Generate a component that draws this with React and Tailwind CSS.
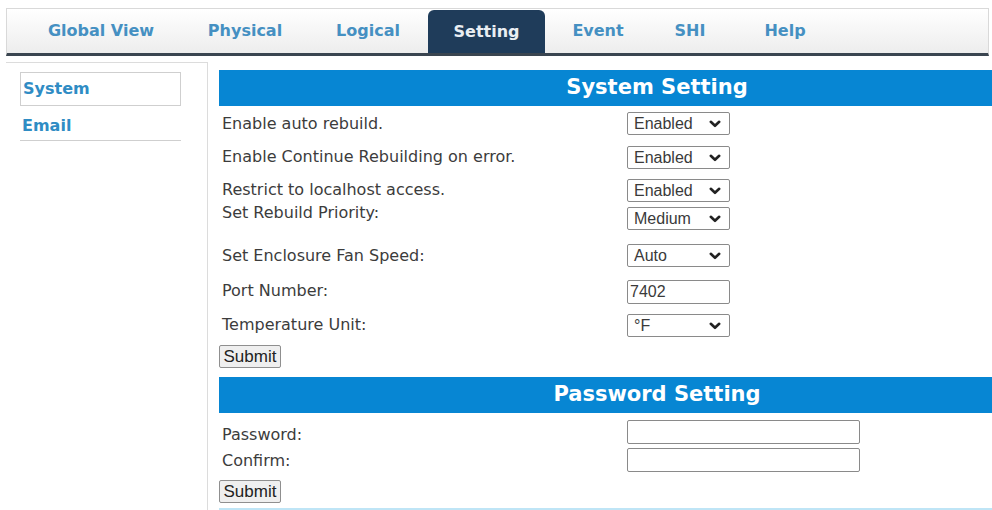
import React from "react";

const tabs = [
  { name: "Global View", ml: "ml-[49px]" },
  { name: "Physical", ml: "ml-[54px]" },
  { name: "Logical", ml: "ml-[33px]" },
  { name: "Setting", ml: "ml-[15px]", active: true },
  { name: "Event", ml: "ml-[8px]" },
  { name: "SHI", ml: "ml-[2px]" },
  { name: "Help", ml: "ml-[5px]" },
];

const Chevron = () => (
  <svg width="12" height="8" viewBox="0 0 12 8" className="flex-none">
    <path d="M1.8 1.8 L6 5.8 L10.2 1.8" fill="none" stroke="#222" strokeWidth="2.6" strokeLinecap="round" strokeLinejoin="round" />
  </svg>
);

// Fake native dropdown so it renders the same everywhere
const Select = ({ value }) => (
  <div className="w-[103px] h-[23px] flex items-center justify-between pl-[6px] pr-[8px] border border-[#8a8a8a] rounded-[2px] bg-white text-[16px] text-[#3a3a3a] font-['Liberation_Sans',sans-serif]">
    <span>{value}</span>
    <Chevron />
  </div>
);

const TextBox = ({ value = "", w = "w-[103px]" }) => (
  <div className={`${w} h-[24px] flex items-center pl-[2px] border border-[#8a8a8a] rounded-[2px] bg-white text-[16px] text-[#3a3a3a] font-['Liberation_Sans',sans-serif]`}>
    {value}
  </div>
);

const SubmitButton = ({ mt }) => (
  <div className={`${mt} w-[62px] h-[23px] flex items-center justify-center border border-[#8f8f8f] rounded-[2px] bg-[#efefef] text-[17px] text-[#222] font-['Liberation_Sans',sans-serif]`}>
    Submit
  </div>
);

const SectionHeader = ({ title, mt }) => (
  <div className={`${mt} h-[36px] w-[876px] bg-[#0786d3] flex items-center justify-center text-white text-[21px] font-bold`}>
    {title}
  </div>
);

// label mt / control mt / row height per row
const systemRows = [
  { label: "Enable auto rebuild.", control: <Select value="Enabled" />, h: "h-[34px]", lt: "mt-[9px]", ct: "mt-[6px]" },
  { label: "Enable Continue Rebuilding on error.", control: <Select value="Enabled" />, h: "h-[33px]", lt: "mt-[8px]", ct: "mt-[6px]" },
  { label: "Restrict to localhost access.", control: <Select value="Enabled" />, h: "h-[29px]", lt: "mt-[8px]", ct: "mt-[6px]" },
  { label: "Set Rebuild Priority:", control: <Select value="Medium" />, h: "h-[36px]", lt: "mt-[2px]", ct: "mt-[5px]" },
  { label: "Set Enclosure Fan Speed:", control: <Select value="Auto" />, h: "h-[37px]", lt: "mt-[9px]", ct: "mt-[6px]" },
  { label: "Port Number:", control: <TextBox value="7402" />, h: "h-[33px]", lt: "mt-[7px]", ct: "mt-[5px]" },
  { label: "Temperature Unit:", control: <Select value="°F" />, h: "h-[36px]", lt: "mt-[8px]", ct: "mt-[6px]" },
];

const FormRow = ({ row }) => (
  <div className={`${row.h} flex items-start`}>
    <div className={`${row.lt} w-[408px] pl-[3px] leading-[18px]`}>{row.label}</div>
    <div className={row.ct}>{row.control}</div>
  </div>
);

export default function App() {
  return (
    <div className="w-[992px] h-[510px] overflow-hidden bg-white font-['DejaVu_Sans',sans-serif] text-[16px] text-[#3c3c3c]">
      {/* ===== TOP TABS ===== */}
      <nav className="mt-[8px] ml-[6px] w-[983px] h-[48px] flex border-t border-l border-r border-[#d9d9d9] border-b-[3px] border-b-[#3a4550] bg-gradient-to-b from-white to-[#ededed]">
        {tabs.map((t) =>
          t.active ? (
            <div
              key={t.name}
              className={`${t.ml} mt-[1px] w-[117px] h-[43px] flex items-center justify-center rounded-t-[6px] bg-[#1f3c5a] text-[#e9eef3] text-[16px] font-bold`}
            >
              {t.name}
            </div>
          ) : (
            <div
              key={t.name}
              className={`${t.ml} w-[90px] flex items-center justify-center whitespace-nowrap text-[16px] font-bold text-[#4590c2]`}
            >
              {t.name}
            </div>
          )
        )}
      </nav>

      <div className="flex">
        {/* ===== SIDEBAR ===== */}
        <aside className="mt-[6px] ml-[6px] w-[202px] h-[460px] flex-none border-t border-r border-[#dcdcdc] pt-[9px] pl-[14px]">
          <div className="w-[161px] h-[34px] flex items-center pl-[2px] border border-[#cfcfcf] text-[16px] font-bold text-[#2f8cc4]">
            System
          </div>
          <div className="w-[161px] h-[35px] flex items-center pt-[5px] pl-[2px] border-b border-[#cfcfcf] text-[16px] font-bold text-[#2f8cc4]">
            Email
          </div>
        </aside>

        {/* ===== SETTINGS ===== */}
        <main className="ml-[11px] flex-none">
          <SectionHeader title="System Setting" mt="mt-[14px]" />
          {systemRows.map((row) => (
            <FormRow key={row.label} row={row} />
          ))}
          <SubmitButton mt="mt-[1px]" />

          <SectionHeader title="Password Setting" mt="mt-[9px]" />
          <FormRow row={{ label: "Password:", control: <TextBox w="w-[233px]" />, h: "h-[33px]", lt: "mt-[13px]", ct: "mt-[7px]" }} />
          <FormRow row={{ label: "Confirm:", control: <TextBox w="w-[233px]" />, h: "h-[31px]", lt: "mt-[6px]", ct: "mt-[2px]" }} />
          <SubmitButton mt="mt-[3px]" />
          <div className="mt-[5px] h-[3px] w-[876px] bg-[#bfe5f6]" />
        </main>
      </div>
    </div>
  );
}
